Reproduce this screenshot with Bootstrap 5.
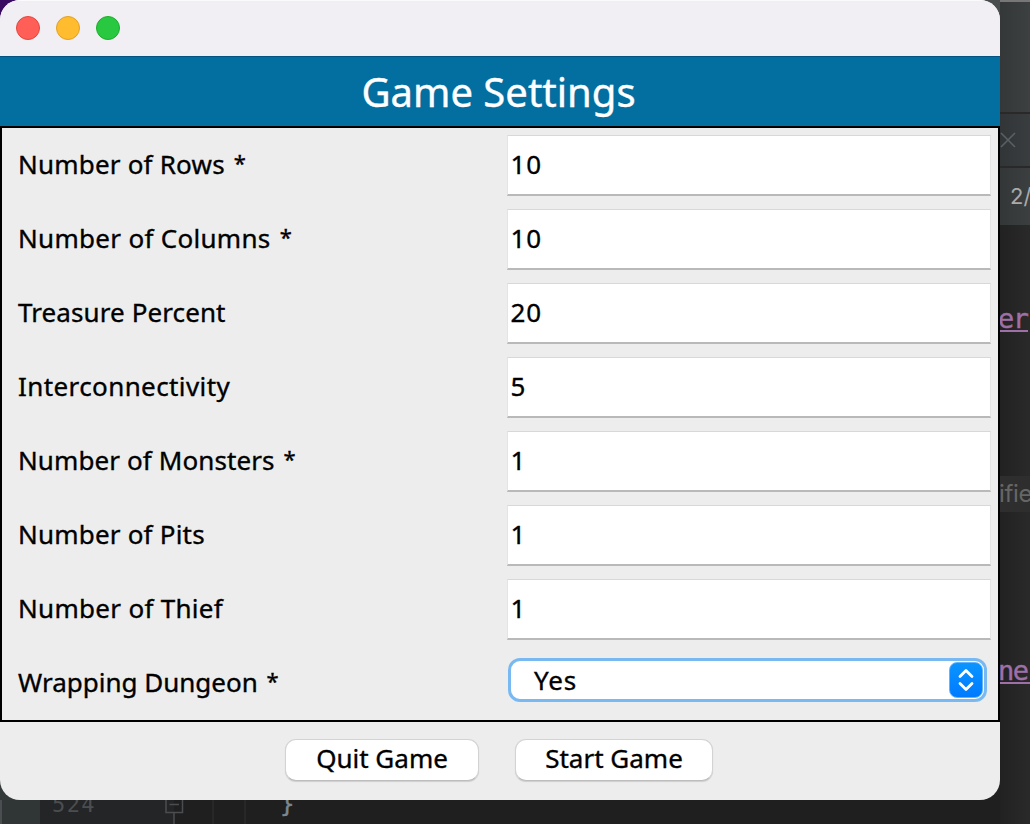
<!DOCTYPE html>
<html lang="en">
<head>
<meta charset="utf-8">
<title>Game Settings</title>
<link href="https://cdn.jsdelivr.net/npm/bootstrap@5.3.0/dist/css/bootstrap.min.css" rel="stylesheet">
<style>
  body { width: 1030px; height: 824px; font-family: "Noto Sans", "Open Sans", sans-serif; color: #000; background: #1f1f1f; }
  .desktop { display: grid; grid-template: 800px 24px / 1000px 30px; width: 1030px; height: 824px; }
  .backing { background: linear-gradient(#3a0a63, #3a0a63) 0 0 / 20px 22px no-repeat, linear-gradient(#34393a, #34393a) 0 100% / 39px 24px no-repeat, linear-gradient(#4a4d4e, #4a4d4e) 100% 0 / 24px 24px no-repeat, #212121; }
  .app-window { width: 1000px; height: 800px; border-radius: 20px; background: #ededed; }
  .titlebar { height: 56px; padding: 0 0 2px 16px; gap: 16px; background: #f1eef4; border-top: 1px solid #faf9fb; }
  .light { width: 24px; height: 24px; border-radius: 50%; border: 1px solid; }
  .light-close { background: #ff5f57; border-color: #e2463f; }
  .light-min { background: #febc2e; border-color: #e0a023; }
  .light-zoom { background: #28c840; border-color: #1dad2b; }
  .heading { height: 70px; background: #036fa1; border-top: 1px solid #045483; padding: 0 3px 0 0; color: #fff; font-size: 40px; line-height: 1; letter-spacing: 0; -webkit-text-stroke: .4px #fff; }
  .settings { height: 596px; border: 2px solid #000; }
  .setting { height: 74px; padding: 0 7px 0 16px; font-size: 26px; letter-spacing: .2px; }
  .setting label { width: 489px; line-height: 36px; padding-bottom: 2px; }
  .setting label, .combo, .actions .btn, .setting .form-control { -webkit-text-stroke: .35px #000; }
  .star { font-size: 22px; line-height: 1; margin-left: 2px; vertical-align: 3px; }
  .ls-wide { letter-spacing: .4px; }
  .ls-mid { letter-spacing: .3px; }
  .ls-slim { letter-spacing: .1px; }
  .ls-none { letter-spacing: 0; }
  .setting .form-control { width: 485px; height: 61px; margin-top: 1px; padding: 0 0 3px 3px; border: 1px solid #e4e4e4; border-top-color: #d8d8d8; border-bottom: 2px solid #b9b9b9; border-radius: 0; font-size: 26px; color: #000; background: #fff; letter-spacing: 1px; }
  .combo { width: 479px; height: 44px; margin: 0 0 6px 1px; border: 3px solid #79b9f2; border-radius: 12px; background: #fff; padding: 0 1px 0 23px; line-height: 34px; letter-spacing: .8px; }
  .stepper { width: 34px; height: 36px; border-radius: 8px; background: linear-gradient(#0a95ff, #007aff); border: 1px solid #63b4fa; }
  .actions { height: 78px; gap: 36px; padding: 17px 2px 0 0; }
  .actions .btn { height: 42px; border: 1px solid #d3d3d3; border-bottom-color: #bdbdbd; border-radius: 11px; background: #fff; color: #000; font-size: 26px; line-height: 36px; padding: 0 0 4px; letter-spacing: 0; box-shadow: 0 1px 1px #0002; }
  .btn-quit { width: 194px; } .btn-start { width: 198px; }
  .ide-right { grid-column: 2; grid-row: 1 / 3; background: linear-gradient(90deg, #00000030, #0000 28px), #292929; overflow: hidden; white-space: nowrap; }
  .ide-top { height: 112px; border-top: 2px solid #777; background: linear-gradient(90deg, #0002, #0000), #3c4041; }
  .ide-tab { height: 56px; border: solid #292929; border-width: 2px 0; background: linear-gradient(90deg, #0002, #0000), #393d3f; }
  .ide-find { height: 57px; padding-left: 10px; background: linear-gradient(90deg, #0002, #0000), #3b3f40; color: #aaa; font: 22px/57px Inter, sans-serif; }
  .ide-code { height: 36px; font: 27px/36px "DejaVu Sans Mono", monospace; letter-spacing: -1.5px; text-indent: -2px; }
  .ide-link { color: #9f6fa8; border-bottom: 2px solid #9f6fa8; height: 30px; line-height: 34px; -webkit-text-stroke: .4px #9f6fa8; }
  .ide-link.ide-short { width: 28px; }
  .ide-gap-a { height: 77px; } .ide-gap-b { height: 144px; } .ide-gap-c { height: 142px; }
  .ide-hint { background: #2e2e2e; color: #666; font: 24px/36px Inter, sans-serif; letter-spacing: -.3px; text-indent: -1px; }
  .ide-bottom { background: #1f1f1f; overflow: hidden; font: 22px/12px "DejaVu Sans Mono", monospace; color: #4b4e50; }
  .ide-edge { width: 40px; background: linear-gradient(90deg, #4b4e50 2px, #303536 2px); }
  .ide-gutter { width: 134px; background: #242526; padding-left: 12px; letter-spacing: 1.4px; line-height: 10px; }
  .ide-brace { color: #7c8791; font-size: 24px; line-height: 8px; -webkit-text-stroke: .4px #7c8791; }
</style>
</head>
<body>
<div class="desktop">
  <div class="backing">
    <main class="app-window overflow-hidden d-flex flex-column">
      <div class="titlebar d-flex align-items-center">
        <span class="light light-close"></span><span class="light light-min"></span><span class="light light-zoom"></span>
      </div>
      <h1 class="heading m-0 fw-normal d-flex align-items-center justify-content-center">Game Settings</h1>
      <form class="settings">
        <div class="setting d-flex align-items-center"><label for="rows">Number of Rows <span class="star">*</span></label><input id="rows" class="form-control" value="10"></div>
        <div class="setting d-flex align-items-center"><label for="cols" class="ls-mid">Number of Columns <span class="star">*</span></label><input id="cols" class="form-control" value="10"></div>
        <div class="setting d-flex align-items-center"><label for="treasure" class="ls-slim">Treasure Percent</label><input id="treasure" class="form-control" value="20"></div>
        <div class="setting d-flex align-items-center"><label for="inter" class="ls-wide">Interconnectivity</label><input id="inter" class="form-control" value="5"></div>
        <div class="setting d-flex align-items-center"><label for="monsters" class="ls-slim">Number of Monsters <span class="star">*</span></label><input id="monsters" class="form-control" value="1"></div>
        <div class="setting d-flex align-items-center"><label for="pits">Number of Pits</label><input id="pits" class="form-control" value="1"></div>
        <div class="setting d-flex align-items-center"><label for="thief" class="ls-mid">Number of Thief</label><input id="thief" class="form-control" value="1"></div>
        <div class="setting d-flex align-items-center"><label class="ls-none">Wrapping Dungeon <span class="star">*</span></label>
          <div class="combo d-flex align-items-center justify-content-between"><span>Yes</span>
            <span class="stepper d-flex align-items-center justify-content-center"><svg width="20" height="26" viewBox="0 0 20 26" fill="none" stroke="#fff" stroke-width="2.8" stroke-linecap="round" stroke-linejoin="round"><path d="M4 9.500 10 3.500l6 6M4 16.500l6 6 6-6"/></svg></span>
          </div></div>
      </form>
      <div class="actions d-flex justify-content-center align-items-start">
        <button class="btn btn-quit">Quit Game</button><button class="btn btn-start">Start Game</button>
      </div>
    </main>
  </div>
  <div class="ide-right">
    <div class="ide-top"></div>
    <div class="ide-tab d-flex align-items-center"><svg width="18" height="18" viewBox="0 0 18 18" stroke="#586064" stroke-width="1.6"><path d="M1 2l14 14M15 2 1 16"/></svg></div>
    <div class="ide-find">2/</div>
    <div class="ide-gap-a"></div>
    <div class="ide-code ide-link ide-short">er</div>
    <div class="ide-gap-b"></div>
    <div class="ide-code ide-hint">ifie</div>
    <div class="ide-gap-c"></div>
    <div class="ide-code ide-link">ne</div>
  </div>
  <div class="ide-bottom d-flex">
    <div class="ide-edge"></div>
    <div class="ide-gutter">524</div>
    <svg width="106" height="24" viewBox="174 0 106 24" fill="none" stroke="#4b4e50" stroke-width="1.5" overflow="visible"><path d="M166 0v12.500h16.500V0M169.500 4.500h9.500M174 13v11"/><path d="M213 0v24M245 0v24" stroke="#2b2b2b"/></svg>
    <span class="ide-brace">}</span>
  </div>
</div>
</body>
</html>
